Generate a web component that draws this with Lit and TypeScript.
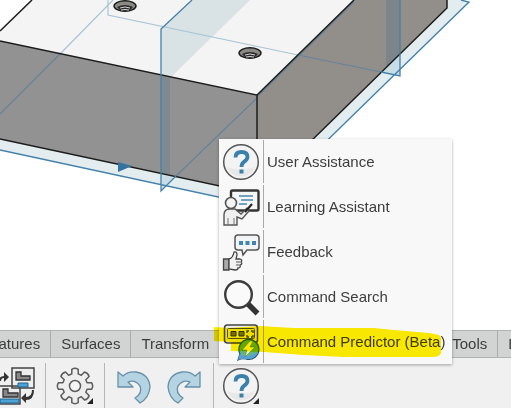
import { LitElement, html, svg, css } from "lit";
import { customElement } from "lit/decorators.js";

const hole = (x: number, y: number) => svg`
  <g transform="translate(${x} ${y})">
    <ellipse rx="11" ry="5.2" fill="#8b8985" stroke="#1a1a1a" stroke-width="1.4"/>
    <path d="M-8 1Q0-3 8 1Q5 5 0 5Q-5 5-8 1Z" fill="#2b2b2b"/>
    <path d="M-5 2Q0 0 5 2M-4 4Q0 3 4 4" fill="none" stroke="#d5d5d5" stroke-width="1"/>
  </g>`;

const scene = html`
  <svg class="scene" viewBox="0 0 511 330" preserveAspectRatio="xMinYMin slice" aria-hidden="true">
    <path d="M0 139L257 194L447 0H461L469 2L260 206L0 150Z" fill="#e3ecef"/>
    <path d="M0 31L32 0H354L257 95L0 41Z" fill="#f4f4f4"/>
    <path d="M161 29L192 0H250L170 78L161 76Z" fill="#d9e3e6"/>
    <path d="M0 41L257 95V194L0 139Z" fill="#929292"/>
    <path d="M257 95L354 0H447V8L257 194Z" fill="#928e8a"/>
    <path d="M161 76L170 78V175L161 173Z" fill="#7f8990"/>
    <path d="M161 173L176 176L161 191ZM400 54V76L381 72Z" fill="#c9dde7"/>
    <path d="M386 0H400V54L386 67Z" fill="#7c8589"/>
    <g fill="none" stroke="#a8c5d6" stroke-width="1.2">
      <path d="M113 0L61 53M108 0V15L298 55"/>
    </g>
    <g fill="none" stroke="#648499" stroke-width="1.2">
      <path d="M61 53L0 114M176 176L257 98M298 55L381 72M257 97L354 2"/>
    </g>
    <g fill="none" stroke="#1c1c1c" stroke-width="1.5">
      <path d="M0 31L32 0M0 41L257 95V194M257 95L354 0M0 139L257 194L447 8V0"/>
    </g>
    <g fill="none" stroke="#4381aa" stroke-width="1.3">
      <path d="M0 150L260 206L469 2L461 0M192 0L161 29V191L176 176M400 0V76L381 72"/>
    </g>
    <path d="M118 162V172L132 166Z" fill="#34739f"/>
    ${hole(125, 6)} ${hole(250, 53)}
  </svg>`;

const helpIcon = html`
  <svg class="icon" viewBox="0 0 38 38" aria-hidden="true">
    <circle cx="19" cy="19" r="17.3" fill="#f3f3f3" stroke="#555" stroke-width="1.5"/>
    <path d="M5 24A15 15 0 0 0 33 24Q19 30 5 24Z" fill="#e8e8e8"/>
    <path d="M13.500 14.500Q13.500 9 19.500 9Q25.500 9 25.500 14Q25.500 16.500 22 18.800Q19.500 20.500 19.500 24" fill="none" stroke="#3b80ab" stroke-width="3.8"/>
    <path d="M17.500 26.500H21.500V30.500H17.500Z" fill="#3b80ab"/>
  </svg>`;

const learningIcon = html`
  <svg class="icon" viewBox="0 0 38 38" aria-hidden="true">
    <rect x="9" y="2.500" width="27.500" height="20" rx="1.500" fill="#f4f6f7" stroke="#333" stroke-width="2.400"/>
    <path d="M17 8H31M19 12H31M17 16H25" stroke="#4688b2" stroke-width="1.700"/>
    <path d="M2 37V27Q2 21 8 21H13L19 26L25 20L27 23L20 31L15 29V37Z" fill="#f0f0f0" stroke="#555" stroke-width="1.400"/>
    <circle cx="9" cy="15" r="5.500" fill="#f4f4f4" stroke="#555" stroke-width="1.600"/>
    <path d="M6 30V37M12 30V37" stroke="#777"/>
    <path d="M23 24L30 16" stroke="#222" stroke-width="2"/>
  </svg>`;

const feedbackIcon = html`
  <svg class="icon" viewBox="0 0 38 38" aria-hidden="true">
    <path d="M16 2H34Q37 2 37 5V14Q37 17 34 17H25L21 22L20 17H16Q13 17 13 14V5Q13 2 16 2Z" fill="#f2f4f5" stroke="#555" stroke-width="1.500"/>
    <path d="M17 8H21V12H17ZM23.500 8H27.500V12H23.500ZM30 8H34V12H30Z" fill="#3d86b4"/>
    <path d="M1.500 26H7V37H1.500Z" fill="#aaa" stroke="#444" stroke-width="1.300"/>
    <path d="M7 26Q11 25 12 19Q15 18 15 22L14 26H18Q21 27 19 29Q21 31 18 32Q19 35 16 35Q16 37 13 37L7 36Z" fill="#f1f1f1" stroke="#444" stroke-width="1.300"/>
    <path d="M14 29H18M14 32H17" stroke="#555"/>
  </svg>`;

const searchIcon = html`
  <svg class="icon" viewBox="0 0 38 38" aria-hidden="true">
    <path d="M26 26L35.500 35.500" stroke="#333" stroke-width="5.500"/>
    <circle cx="16.500" cy="16.500" r="13.300" fill="#fafafa" stroke="#3c3c3c" stroke-width="2.400"/>
  </svg>`;

const predictorIcon = html`
  <svg class="icon" viewBox="0 0 38 38" aria-hidden="true">
    <rect x="2.500" y="2" width="33" height="18" rx="3" fill="#eee" stroke="#444" stroke-width="1.500"/>
    <rect x="5.500" y="5.500" width="27" height="10" rx="1" fill="#eee" stroke="#555"/>
    <path d="M9 8.500H14V13H9ZM17 8.500H22V13H17Z" fill="#777" stroke="#333"/>
    <path d="M25 10V8H27M29 8H31V10M31 12V14H29M27 14H25V12" fill="none" stroke="#444" stroke-width="1.300"/>
    <path d="M16 37L18 31A10 10 0 1 1 24 36Q20 35 16 37Z" fill="#62b58a" stroke="#24566b" stroke-width="1.200"/>
    <path d="M16 37L18 31Q26 36 36 29Q33 37 24 36Q20 35 16 37Z" fill="#5aa0d8"/>
    <path d="M28 18L20 27H25L23 34L33 24H28L31 18Z" fill="#fff8b0" stroke="#347c3a" stroke-width="0.500"/>
  </svg>`;

const windowsIcon = html`
  <svg class="icon" viewBox="0 0 38 38" aria-hidden="true">
    <g fill="#eee" stroke="#444" stroke-width="1.500">
      <path d="M15 1H37V21H15ZM0 19H23V37H0Z"/>
    </g>
    <path d="M19 5H24V9H33V13H19ZM6 22H11V26H21V30H6Z" fill="#888" stroke="#333" stroke-width="1.300"/>
    <path d="M21 16H31V20H21ZM3 32H22V36H3Z" fill="#4ba3d8" stroke="#23648d"/>
    <path d="M2 14Q2 9 7 9V5L12 10L7 15V11Q4 11 4 14ZM35 23Q35 30 29 30V26L24 31L29 36V33Q37 33 37 23Z" fill="#333"/>
  </svg>`;

const polar = (radius: number, degrees: number) => {
  const angle = (degrees * Math.PI) / 180;
  return `${(19 + radius * Math.cos(angle)).toFixed(1)} ${(19 + radius * Math.sin(angle)).toFixed(1)}`;
};

const gearOutline =
  "M" +
  Array.from({ length: 8 }, (_, tooth) => {
    const a = tooth * 45;
    return `${polar(12.5, a - 15)}L${polar(17, a - 11)}Q${polar(18.6, a)} ${polar(17, a + 11)}L${polar(12.5, a + 15)}`;
  }).join("L") +
  "Z";

const gearIcon = html`
  <svg class="icon" viewBox="0 0 38 38" aria-hidden="true">
    <path d=${gearOutline} fill="#ededed" stroke="#5c5c5c" stroke-width="1.500" stroke-linejoin="round"/>
    <circle cx="19" cy="19" r="5.500" fill="#f4f4f4" stroke="#5c5c5c" stroke-width="1.500"/>
  </svg>`;

const undoPath = svg`<path d="M3 5L8 9Q13 4 21 5Q34 7 35 20Q34 31 25 36L20 31Q28 26 25 19Q20 12 13 15L18 20H3Z" fill="#b4d4e4" stroke="#6790a6" stroke-width="1.300" stroke-linejoin="round"/>`;
const undoIcon = html`<svg class="icon" viewBox="0 0 38 38" aria-hidden="true">${undoPath}</svg>`;
const redoIcon = html`<svg class="icon" viewBox="0 0 38 38" aria-hidden="true"><g transform="matrix(-1 0 0 1 38 0)">${undoPath}</g></svg>`;

const corner = html`<svg class="corner" viewBox="0 0 8 8" aria-hidden="true"><path d="M8 0V8H0Z" fill="#f0f0f0"/><path d="M7 1V7H1Z" fill="#222"/></svg>`;

const menuItems = [
  { label: "User Assistance", icon: helpIcon },
  { label: "Learning Assistant", icon: learningIcon },
  { label: "Feedback", icon: feedbackIcon },
  { label: "Command Search", icon: searchIcon },
  { label: "Command Predictor (Beta)", icon: predictorIcon },
];

@customElement("app-root")
export class AppRoot extends LitElement {
  static styles = css`
    :host {
      display: flex;
      flex-direction: column;
      height: 100vh;
      overflow: hidden;
      background: #fff;
      color: #3d3d3d;
      font: 15px/20px "Liberation Sans", Arial, sans-serif;
    }
    button {
      padding: 0;
      border: 0;
      background: none;
      color: inherit;
      font: inherit;
      white-space: nowrap;
    }
    svg { display: block; }
    .viewport { flex: 1; min-height: 0; overflow: hidden; }
    .scene { width: 100%; height: 100%; }
    .tabs {
      display: flex;
      overflow: hidden;
      border-top: 1px solid #b0b3b3;
      border-bottom: 1px solid #b0b3b3;
      background: #d2d4d4;
    }
    .group { display: flex; flex: none; }
    .group.main { margin-left: -29px; }
    .group.more { margin-left: 222px; }
    .tab {
      height: 26px;
      padding: 0 10px;
      border-right: 1px solid #a9acac;
    }
    .toolbar {
      display: flex;
      align-items: center;
      height: 45px;
      padding-top: 5px;
      background: #f0f0f0;
    }
    .section {
      display: flex;
      align-items: center;
      justify-content: center;
      gap: 12px;
      height: 45px;
      padding: 0 10px;
      border-right: 1px solid #b5b5b5;
    }
    .section.first { padding-left: 0; margin-left: -3px; }
    .section.last { border: 0; padding: 0 8px; position: relative; }
    .tool { position: relative; }
    .icon { width: 38px; height: 38px; flex: none; }
    .corner { position: absolute; right: 0; bottom: 0; width: 8px; height: 8px; }
    .menu {
      position: absolute;
      left: 5px;
      bottom: 44px;
      width: 233px;
      margin: 0;
      padding: 0;
      list-style: none;
      background: #f8f8f8;
      box-shadow: 0 1px 3px #0005;
    }
    .item {
      display: flex;
      align-items: center;
      width: 100%;
      height: 45px;
      padding-left: 3px;
      text-align: left;
    }
    .label {
      display: flex;
      align-items: center;
      height: 43px;
      margin-left: 3px;
      padding-left: 3px;
      border-left: 1px solid #aaa;
    }
    .marker {
      position: absolute;
      left: -5px;
      bottom: 5px;
      width: 227px;
      height: 34px;
      mix-blend-mode: multiply;
      pointer-events: none;
    }
  `;

  render() {
    return html`
      <main class="viewport">${scene}</main>
      <nav class="tabs">
        <div class="group main">
          <button class="tab">Features</button>
          <button class="tab">Surfaces</button>
          <button class="tab">Transform</button>
        </div>
        <div class="group more">
          <button class="tab">Tools</button>
          <button class="tab">Lifecycle</button>
        </div>
      </nav>
      <footer class="toolbar">
        <div class="section first">
          <button class="tool" aria-label="Switch window">${windowsIcon}</button>
        </div>
        <div class="section">
          <button class="tool" aria-label="Options">${gearIcon}${corner}</button>
        </div>
        <div class="section">
          <button class="tool" aria-label="Undo">${undoIcon}</button>
          <button class="tool" aria-label="Redo">${redoIcon}</button>
        </div>
        <div class="section last">
          <button class="tool" aria-label="Help">${helpIcon}${corner}</button>
          <ul class="menu">
            ${menuItems.map(
              (item) => html`<li>
                <button class="item">${item.icon}<span class="label">${item.label}</span></button>
              </li>`
            )}
            <svg class="marker" viewBox="0 0 227 34" aria-hidden="true">
              <path d="M0 2L15 3L46 1L80 3H160L180 5L215 8L225 10L227 13V28Q226 32 218 32H130L90 30L50 27L17 26V17L0 16Z" fill="#ffee00"/>
            </svg>
          </ul>
        </div>
      </footer>
    `;
  }
}
